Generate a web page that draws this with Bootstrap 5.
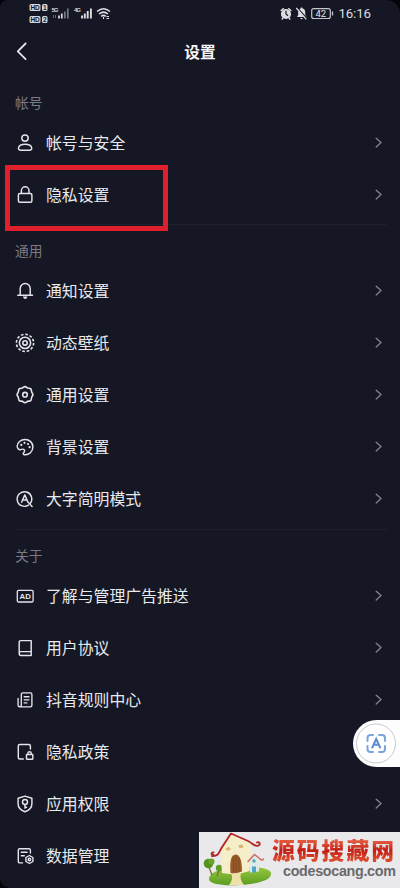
<!DOCTYPE html>
<html lang="zh-CN">
<head>
<meta charset="utf-8">
<meta name="viewport" content="width=device-width, initial-scale=1">
<title>设置</title>
<link href="https://cdn.jsdelivr.net/npm/bootstrap@5.3.0/dist/css/bootstrap.min.css" rel="stylesheet">
<style>
html{background:#05060b}
body{background:#05060b;font-family:"Noto Sans CJK SC",sans-serif;color:#e9eaee;height:888px;overflow:hidden}
.phone{width:400px;height:888px;background:#151724;border-radius:8px 14px 0 10px}
.status{height:28px;padding:0 29px 0 29px}
.status-time{font:13.3px/28px Roboto,sans-serif;letter-spacing:-.1px;color:#dcdde2;margin-left:4px}
.topbar{height:48px;margin-bottom:13.9px}
.topbar h1{font-size:15.7px;font-weight:700;color:#f5f5f7;line-height:48px}
.back{left:14px;top:12px}
.group-title{height:26.6px;line-height:25px;font-size:13.8px;color:#797b85;padding-left:15px}
.setting{height:52.15px;padding:0 17px 0 14.5px;font-size:15.85px;line-height:24px;color:#e9eaee}
.setting .ico{width:20px;height:20px;margin-right:11.5px;overflow:visible}
.ico,.chev,.line{fill:none;stroke:#e4e5ea;stroke-width:1.45;stroke-linecap:round;stroke-linejoin:round}
.solid{fill:#e4e5ea;stroke:none}
.chev{stroke:#7f818b;stroke-width:1.4}
.rule{height:17.4px;padding:3.2px 13px 0 15px}
.rule i{height:1px;background:#1e202c}
.highlight{left:5px;top:165px;width:163px;height:66px;border:5px solid #df1f2b}
.scan{left:353px;top:720px;width:47px;height:47px;background:#fdfdfe;border-radius:24px 0 0 24px}
.brand{left:199px;top:832px;width:201px;height:56px;background:#e9e8ea}
.brand-name{left:73px;top:5px;font-size:22.8px;letter-spacing:2px;line-height:25px;font-weight:900;color:#c92a1c;background:linear-gradient(#e0553c 20%,#c21c12 55%,#d9472b 85%);-webkit-background-clip:text;background-clip:text;-webkit-text-fill-color:transparent}
.brand-url{left:84px;top:31px;font:bold 14.3px/16px "Liberation Sans",sans-serif;letter-spacing:-.3px;color:#69696c}
</style>
</head>
<body>
<main class="phone position-relative overflow-hidden">
  <div class="status d-flex align-items-center justify-content-between">
    <svg width="84" height="28" viewBox="29 0 84 28">
      <g fill="#d6d7dc"><rect x="29.5" y="4" width="11" height="7" rx="1.5"/><rect x="42" y="4" width="5.5" height="7" rx="1.5"/><rect x="29.5" y="16" width="11" height="7" rx="1.5"/><rect x="42" y="16" width="5.5" height="7" rx="1.5"/></g>
      <g font-family="Liberation Sans,sans-serif" font-weight="700" font-size="6.5" fill="#151724"><text x="30.6" y="9.9" textLength="9">HD</text><text x="43" y="9.9">1</text><text x="30.6" y="21.9" textLength="9">HD</text><text x="43" y="21.9">2</text></g>
      <g font-family="Liberation Sans,sans-serif" font-weight="700" font-size="6" fill="#d6d7dc"><text x="51.5" y="12" textLength="7">5G</text><text x="74" y="12" textLength="7">4G</text></g>
      <path d="M53.5 18v-3m2 0v3" stroke="#666873" fill="none"/>
      <path d="M59 18.5v-3m2.8 3v-5" stroke="#dcdde2" stroke-width="1.7"/><path d="M64.8 18.5v-7m3 7V8.5" stroke="#777984" stroke-width="1.7"/>
      <path d="M82 18.5v-3m2.8 3v-5m2.9 5v-7.5m3.2 7.5V8.5" stroke="#dcdde2" stroke-width="1.9"/>
      <g fill="none" stroke="#dcdde2" stroke-width="1.5"><path d="M97 11.5q6.5-5.5 13 0M99.1 14q4.4-3.8 8.8 0M101.2 16.3q2.3-1.9 4.6 0"/><path d="M103.5 17v2m3-2.5h2.5m-2.5 2h2.5" stroke-width="1.1"/></g>
    </svg>
    <div class="d-flex align-items-center">
      <svg width="54" height="28" viewBox="281 0 54 28">
        <circle cx="287" cy="14" r="5.1" fill="#dcdde2"/><path d="M281.7 11l3-2.8m4.6 0 3 2.8M284 18l-1.2 1.5m7.2-1.5 1.2 1.5" stroke="#dcdde2" stroke-width="1.5"/><path d="M287 10.8V14l2 1.7" fill="none" stroke="#151724" stroke-width="1.2"/>
        <path d="M298 17h9.5l-1.3-2v-3a4 4 0 0 0-3-3.7V7.4h-1.4v.9a4 4 0 0 0-2.6 3.7v3zM301 18h3l-1.5 1.5z" fill="#dcdde2"/><path d="M298.3 7.7l10 11.3" stroke="#151724" stroke-width="1.2"/><path d="M297.3 8l10 11.3" stroke="#dcdde2" stroke-width="1.2"/>
        <rect x="312.7" y="8.7" width="18.6" height="9.8" rx="2" fill="none" stroke="#c5c6cc" stroke-width="1.2"/><path d="M333.5 11.5v4" stroke="#c5c6cc" stroke-width="1.3"/>
        <text x="316.5" y="17.2" font-family="Roboto,sans-serif" font-size="9.5" fill="#e4e5ea">42</text>
      </svg>
      <span class="status-time">16:16</span>
    </div>
  </div>
  <header class="topbar position-relative text-center">
    <svg class="back line position-absolute" width="16" height="24" viewBox="14 40 16 24"><path d="M25.6 43.5l-7.8 7.8 7.8 7.8" stroke-width="1.8"/></svg>
    <h1 class="m-0">设置</h1>
  </header>

  <section>
    <div class="group-title">帐号</div>
    <div class="setting d-flex align-items-center"><svg class="ico" viewBox="0 0 20 20"><circle cx="10" cy="5.1" r="3.2"/><path d="M5.8 17.2h8.7c1.6 0 2.5-1 2.2-2.4-.5-2.4-2.5-3.6-6.6-3.6s-6.1 1.2-6.6 3.6c-.3 1.4.6 2.4 2.3 2.4z"/></svg><span>帐号与安全</span><svg class="chev ms-auto" width="8" height="12" viewBox="0 0 8 12"><path d="M1.2 1.2 6 5.6 1.2 10"/></svg></div>
    <div class="setting d-flex align-items-center"><svg class="ico" viewBox="0 0 20 20"><rect x="3.4" y="8.4" width="13.5" height="8.8" rx="1.5"/><path d="M6.4 8.2V5.6a3.8 3.8 0 0 1 7.6 0v2.6"/></svg><span>隐私设置</span><svg class="chev ms-auto" width="8" height="12" viewBox="0 0 8 12"><path d="M1.2 1.2 6 5.6 1.2 10"/></svg></div>
    <div class="rule"><i class="d-block"></i></div>
  </section>

  <section>
    <div class="group-title">通用</div>
    <div class="setting d-flex align-items-center"><svg class="ico" viewBox="0 0 20 20"><path d="M2.8 14.2h14.7M5.2 14V7.5a5 5 0 0 1 10 0V14"/><path class="solid" d="M8 15.6h4.4c-.2 1.6-1.1 2.3-2.2 2.3S8.2 17.2 8 15.6z"/></svg><span>通知设置</span><svg class="chev ms-auto" width="8" height="12" viewBox="0 0 8 12"><path d="M1.2 1.2 6 5.6 1.2 10"/></svg></div>
    <div class="setting d-flex align-items-center"><svg class="ico" viewBox="0 0 20 20"><circle cx="10" cy="9.9" r="8.6" stroke-dasharray="2.7 1.803" stroke-width="1.6" stroke-linecap="butt"/><circle cx="10" cy="9.9" r="5.6" stroke-width="1.6"/><circle cx="10" cy="9.9" r="2.2" stroke-width="1.6"/></svg><span>动态壁纸</span><svg class="chev ms-auto" width="8" height="12" viewBox="0 0 8 12"><path d="M1.2 1.2 6 5.6 1.2 10"/></svg></div>
    <div class="setting d-flex align-items-center"><svg class="ico" viewBox="0 0 20 20"><path d="M8.3 2.4q1.7-1.6 3.4 0 .9.9 2.2.8 2.4-.1 2.5 2.3 0 1.3.7 2.2 1.6 1.9 0 3.9-.7.9-.7 2.2-.1 2.4-2.5 2.3-1.3-.1-2.2.8-1.7 1.6-3.4 0-.9-.9-2.2-.8-2.4.1-2.5-2.3 0-1.3-.7-2.2-1.6-2 0-3.9.7-.9.7-2.2.1-2.4 2.5-2.3 1.3.1 2.2-.8z" stroke-width="1.6"/><circle cx="10" cy="9.65" r="2.3" stroke-width="1.6"/></svg><span>通用设置</span><svg class="chev ms-auto" width="8" height="12" viewBox="0 0 8 12"><path d="M1.2 1.2 6 5.6 1.2 10"/></svg></div>
    <div class="setting d-flex align-items-center"><svg class="ico" viewBox="0 0 20 20"><path d="M9.2 17.7c5 .6 8.7-3.2 8.7-7.7 0-4.3-3.4-7.5-7.8-7.5S2.2 5.6 2.2 9.1c0 2.8 1.8 4.2 4.3 3.3 2.1-.8 3.6.3 2.9 2.2-.4 1.1-1.2 1.2-1.2 2 0 .6.4 1 1 1.1z"/><g class="solid"><circle cx="6.3" cy="7.9" r="1.1"/><circle cx="9.5" cy="5.8" r="1.1"/><circle cx="13" cy="7" r="1.1"/><circle cx="14.6" cy="10.2" r="1.1"/></g></svg><span>背景设置</span><svg class="chev ms-auto" width="8" height="12" viewBox="0 0 8 12"><path d="M1.2 1.2 6 5.6 1.2 10"/></svg></div>
    <div class="setting d-flex align-items-center"><svg class="ico" viewBox="0 0 20 20"><path d="M13.5 16.1a7.3 7.3 0 1 1 1.3-1.1M12.9 13.1l4.2 4.3M6.6 13.3 9.8 5.9l3.1 7.2M7.7 11h4.2"/></svg><span>大字简明模式</span><svg class="chev ms-auto" width="8" height="12" viewBox="0 0 8 12"><path d="M1.2 1.2 6 5.6 1.2 10"/></svg></div>
    <div class="rule"><i class="d-block"></i></div>
  </section>

  <section>
    <div class="group-title">关于</div>
    <div class="setting d-flex align-items-center"><svg class="ico" viewBox="0 0 20 20"><rect x="2.3" y="4.4" width="15.8" height="11.6" rx="1.2" stroke-width="1.3"/><text class="solid" x="4.4" y="13" font-family="Liberation Sans,sans-serif" font-size="7.8" font-weight="700" textLength="11.6">AD</text></svg><span>了解与管理广告推送</span><svg class="chev ms-auto" width="8" height="12" viewBox="0 0 8 12"><path d="M1.2 1.2 6 5.6 1.2 10"/></svg></div>
    <div class="setting d-flex align-items-center"><svg class="ico" viewBox="0 0 20 20"><path d="M4.2 15.5V4.3q0-1.7 1.7-1.7h10.3v14.8H6q-1.8 0-1.8-1.9 0-1.9 1.8-1.9h10.2"/></svg><span>用户协议</span><svg class="chev ms-auto" width="8" height="12" viewBox="0 0 8 12"><path d="M1.2 1.2 6 5.6 1.2 10"/></svg></div>
    <div class="setting d-flex align-items-center"><svg class="ico" viewBox="0 0 20 20"><path d="M6.3 14.7V4.4q0-1.5 1.5-1.5h7.6q1.5 0 1.5 1.5v10.9q0 1.5-1.5 1.5H4.6q-1.5 0-1.5-1.5V8.5M6.3 14.7q0 2-1.6 2M9.2 6.7h4.7M9.2 9.8h4.7M9.2 12.9h2.6" stroke-width="1.35"/></svg><span>抖音规则中心</span><svg class="chev ms-auto" width="8" height="12" viewBox="0 0 8 12"><path d="M1.2 1.2 6 5.6 1.2 10"/></svg></div>
    <div class="setting d-flex align-items-center"><svg class="ico" viewBox="0 0 20 20"><path d="M15.4 7V4q0-1.5-1.5-1.5H4.8Q3.3 2.5 3.3 4v11.4q0 1.5 1.5 1.5h3.5"/><rect x="11.5" y="12.4" width="6.3" height="4.9" rx=".6"/><path d="M12.9 12.2v-.7q0-1.7 1.7-1.7t1.7 1.7v.7"/></svg><span>隐私政策</span><svg class="chev ms-auto" width="8" height="12" viewBox="0 0 8 12"><path d="M1.2 1.2 6 5.6 1.2 10"/></svg></div>
    <div class="setting d-flex align-items-center"><svg class="ico" viewBox="0 0 20 20"><path d="M10 2.1 16.9 4.2v5.5c0 4.1-3.1 6.7-6.9 8.1-3.8-1.4-6.9-4-6.9-8.1V4.2z"/><circle cx="10" cy="8" r="2.5"/><path d="M10 10.5v3.7m0-1h1.5"/></svg><span>应用权限</span><svg class="chev ms-auto" width="8" height="12" viewBox="0 0 8 12"><path d="M1.2 1.2 6 5.6 1.2 10"/></svg></div>
    <div class="setting d-flex align-items-center"><svg class="ico" viewBox="0 0 20 20"><path d="M15.4 7V4.2q0-1.5-1.5-1.5H4.8q-1.5 0-1.5 1.5v11.2q0 1.5 1.5 1.5h2.7M6.3 6.3h5.8M6.3 9.7h3M14.4 9.5l3.5 2v4l-3.5 2-3.5-2v-4z" stroke-width="1.4"/><circle cx="14.4" cy="13.5" r="1.2"/></svg><span>数据管理</span></div>
  </section>

  <div class="highlight position-absolute"></div>

  <div class="scan position-absolute">
    <svg class="d-block" width="47" height="47" viewBox="353 720 47 47"><circle cx="376" cy="743.5" r="19.5" fill="#fff" stroke="#c8c9ce"/><g fill="none" stroke="#7ba3dc" stroke-width="2" stroke-linecap="round"><path d="M367.5 741v-3q0-3 3-3h2.5m6 0h3q3 0 3 3v3m0 5v3q0 3-3 3h-3m-6 0h-2.5q-3 0-3-3v-3"/><path d="M372.3 747.5l3.9-8.5 3.9 8.5m-6.3-2.7h4.8" stroke="#5f8dd6" stroke-width="2"/></g></svg>
  </div>

  <div class="brand position-absolute">
    <svg class="position-absolute start-0 top-0" width="74" height="56" viewBox="199 832 74 56">
      <defs><linearGradient id="grass" x2="0" y2="1"><stop stop-color="#9acb3e"/><stop offset="1" stop-color="#5b9c22"/></linearGradient></defs>
      <path d="M209 879c0-6 10-10 24-12 20-2 37 1 38 6 1 7-13 11-31 12-18 1-31-1-31-6z" fill="url(#grass)"/>
      <path d="M208.5 866l3.5 9m7-5-2 6" stroke="#7d6a35" stroke-width="1.3"/><circle cx="208.5" cy="863.5" r="4.8" fill="#559320"/><circle cx="211.5" cy="861.5" r="3" fill="#68a32a"/><circle cx="219" cy="868" r="3.2" fill="#5f9d29"/>
      <path d="M220.5 850 231 834l20 8.5-1.5 28.5q-13 5-27.5 2z" fill="#f6edc9"/>
      <path d="M231 873h10q-2 6 3 12h-15q5-6 2-12z" fill="#eee0a8"/>
      <path d="M230.5 873q-1.5-18 5-18.5 6.500 0 6.500 17-5 2.500-11.500 1.500z" fill="#9a5b2b"/><path d="M233.5 857.5v15m2.500-17v17m3-15v14.500" stroke="#74451f" stroke-width=".7"/>
      <path d="M225.5 848.5l3.500-1.700 2 2.500-3.500 1.700zm13-3.200 4-.7 1 3-4 .7z" fill="#d9b36c"/>
      <path d="M213.5 855c-2.500.5-2.500-3 0-2.500M212 856c6 .5 7-3 9.500-8L231 833.5 248 841c5 2.500 7 6.500 10.500 4.500 2.500-1.500.5-4.500-1.500-3" fill="none" stroke="#b3272a" stroke-width="1.9" stroke-linecap="round" stroke-linejoin="round"/>
      <path d="M249.5 860l5-5 4.500 4v12.500l-9 1z" fill="#dcebe6"/><path d="M252 866.5h4v6h-4z" fill="#4fa4c4"/><circle cx="254" cy="861" r="1.7" fill="#4fa4c4"/><path d="M248 861.5l6.500-7 4.500 3.500c2 2 3 3 4.500 1" fill="none" stroke="#cf6b5d" stroke-width="1.5" stroke-linecap="round"/>
    </svg>
    <div class="brand-name position-absolute text-nowrap">源码搜藏网</div>
    <div class="brand-url position-absolute text-nowrap">codesocang.com</div>
  </div>
</main>
<script src="https://cdn.jsdelivr.net/npm/bootstrap@5.3.0/dist/js/bootstrap.bundle.min.js"></script>
</body>
</html>
